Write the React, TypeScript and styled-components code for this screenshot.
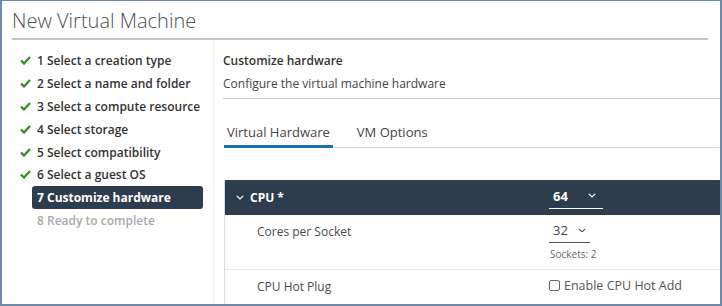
import React from "react";
import styled, { createGlobalStyle } from "styled-components";

const Global = createGlobalStyle`
  html, body { margin: 0; padding: 0; background: #fff; }
  body { font-family: "Open Sans", "Liberation Sans", sans-serif; }
  * { box-sizing: border-box; }
`;

const Frame = styled.div`
  width: 722px;
  height: 306px;
  border-style: solid;
  border-color: #6f8aa8;
  border-width: 1px 2px 2px 2px;
  overflow: hidden;
  display: flex;
  flex-direction: column;
  background: #fff;
`;

const Header = styled.div`
  margin: 0 12px 0 10px;
  height: 39px;
  border-bottom: 2px solid #c4c4c4;
  display: flex;
  align-items: flex-end;
  padding-bottom: 4px;
`;

const Title = styled.h1`
  margin: 0;
  font-size: 20px;
  font-weight: 300;
  color: #505050;
  letter-spacing: 0px;
`;

const Body = styled.div`
  flex: 1;
  display: flex;
  min-height: 0;
`;

const Nav = styled.ul`
  list-style: none;
  margin: 0;
  padding: 9px 10px 0 16px;
  width: 212px;
  flex-shrink: 0;
  border-right: 1px solid #f0f0f0;
  display: flex;
  flex-direction: column;
`;

const Step = styled.li<{ $state: "done" | "active" | "todo" }>`
  height: 22.9px;
  display: flex;
  align-items: center;
  gap: 5px;
  font-size: 12px;
  font-weight: ${(p) => (p.$state === "active" ? 700 : 600)};
  color: ${(p) =>
    p.$state === "active" ? "#fff" : p.$state === "todo" ? "#a9a9a9" : "#333"};
`;

const CheckSlot = styled.span`
  width: 14px;
  display: inline-flex;
  justify-content: center;
`;

const StepLabel = styled.span<{ $active?: boolean }>`
  flex: 1;
  height: 23px;
  display: flex;
  align-items: center;
  padding-left: 5px;
  margin-left: -5px;
  border-radius: 3px;
  background: ${(p) => (p.$active ? "#2e3d4d" : "transparent")};
`;

const Main = styled.div`
  flex: 1;
  padding: 10px 0 0 9px;
  display: flex;
  flex-direction: column;
  min-width: 0;
`;

const Heading = styled.div`
  border-bottom: 1px solid #cfcfcf;
  padding-bottom: 2px;
`;

const HeadTitle = styled.div`
  font-size: 12px;
  font-weight: 600;
  color: #333;
  line-height: 22px;
`;

const HeadSub = styled.div`
  font-size: 12px;
  color: #444;
  line-height: 24px;
`;

const Tabs = styled.div`
  margin-top: 21px;
  margin-left: 1px;
  display: flex;
  gap: 21px;
  border-bottom: 1px solid #d6d6d6;
`;

const Tab = styled.div<{ $active?: boolean }>`
  font-size: 13px;
  color: #444;
  padding: 0 3px;
  height: 28px;
  line-height: 24px;
  border-bottom: 3px solid ${(p) => (p.$active ? "#1a73ad" : "transparent")};
  margin-bottom: -1px;
`;

const Table = styled.div`
  margin-top: 32px;
  margin-left: 1px;
  border-left: 1px solid #dcdcdc;
  display: flex;
  flex-direction: column;
`;

const GroupRow = styled.div`
  height: 35px;
  background: #2e3d4d;
  display: grid;
  grid-template-columns: 324px 1fr;
  align-items: center;
  color: #fff;
`;

const GroupName = styled.div`
  display: flex;
  align-items: center;
  gap: 6px;
  padding-left: 11px;
  font-size: 12px;
  font-weight: 700;
`;

const Row = styled.div<{ $h: number }>`
  height: ${(p) => p.$h}px;
  display: grid;
  grid-template-columns: 324px 1fr;
  border-bottom: 1px solid #e6e6e6;
  font-size: 12px;
  color: #4a4a4a;
`;

const RowLabel = styled.div`
  padding-left: 32px;
  padding-top: 8px;
`;

const Cell = styled.div`
  padding-top: 6px;
  display: flex;
  flex-direction: column;
  align-items: flex-start;
`;

const Select = styled.div<{ $w: number; $dark?: boolean }>`
  width: ${(p) => p.$w}px;
  display: flex;
  align-items: center;
  gap: ${(p) => (p.$dark ? 20 : 10)}px;
  padding: 0 0 3px 4px;
  border-bottom: 1px solid ${(p) => (p.$dark ? "#fff" : "#555")};
  font-size: 13px;
  font-weight: ${(p) => (p.$dark ? 700 : 400)};
  color: ${(p) => (p.$dark ? "#fff" : "#444")};
`;

const Hint = styled.div`
  font-size: 10px;
  color: #666;
  margin-top: 4px;
  padding-left: 1px;
`;

const CheckLine = styled.label`
  display: flex;
  align-items: center;
  gap: 4px;
  padding-top: 1px;
  font-size: 12.5px;
  color: #555;
`;

const Box = styled.span`
  width: 11px;
  height: 11px;
  border: 1px solid #666;
  border-radius: 2px;
  display: inline-block;
`;

const Check = () => (
  <svg width="11" height="9" viewBox="0 0 11 9">
    <path d="M1 4.5 L4 7.5 L10 1" stroke="#2f8a1f" strokeWidth="2.2" fill="none" />
  </svg>
);

const Chevron = ({ color = "#fff", size = 8 }: { color?: string; size?: number }) => (
  <svg width={size} height={size * 0.6} viewBox="0 0 10 6">
    <path d="M1 1 L5 5 L9 1" stroke={color} strokeWidth="1.4" fill="none" />
  </svg>
);

const steps: [string, "done" | "active" | "todo"][] = [
  ["1 Select a creation type", "done"],
  ["2 Select a name and folder", "done"],
  ["3 Select a compute resource", "done"],
  ["4 Select storage", "done"],
  ["5 Select compatibility", "done"],
  ["6 Select a guest OS", "done"],
  ["7 Customize hardware", "active"],
  ["8 Ready to complete", "todo"],
];

export default function App() {
  return (
    <>
      <Global />
      <Frame>
        <Header>
          <Title>New Virtual Machine</Title>
        </Header>
        <Body>
          <Nav>
            {steps.map(([label, state]) => (
              <Step key={label} $state={state}>
                <CheckSlot>{state === "done" ? <Check /> : null}</CheckSlot>
                <StepLabel $active={state === "active"}>{label}</StepLabel>
              </Step>
            ))}
          </Nav>
          <Main>
            <Heading>
              <HeadTitle>Customize hardware</HeadTitle>
              <HeadSub>Configure the virtual machine hardware</HeadSub>
            </Heading>
            <Tabs>
              <Tab $active>Virtual Hardware</Tab>
              <Tab>VM Options</Tab>
            </Tabs>
            <Table>
              <GroupRow>
                <GroupName>
                  <Chevron />
                  CPU *
                </GroupName>
                <div>
                  <Select $w={54} $dark>
                    64 <Chevron />
                  </Select>
                </div>
              </GroupRow>
              <Row $h={55}>
                <RowLabel>Cores per Socket</RowLabel>
                <Cell>
                  <Select $w={41}>
                    32 <Chevron color="#555" />
                  </Select>
                  <Hint>Sockets: 2</Hint>
                </Cell>
              </Row>
              <Row $h={40}>
                <RowLabel>CPU Hot Plug</RowLabel>
                <Cell>
                  <CheckLine>
                    <Box />
                    Enable CPU Hot Add
                  </CheckLine>
                </Cell>
              </Row>
            </Table>
          </Main>
        </Body>
      </Frame>
    </>
  );
}
